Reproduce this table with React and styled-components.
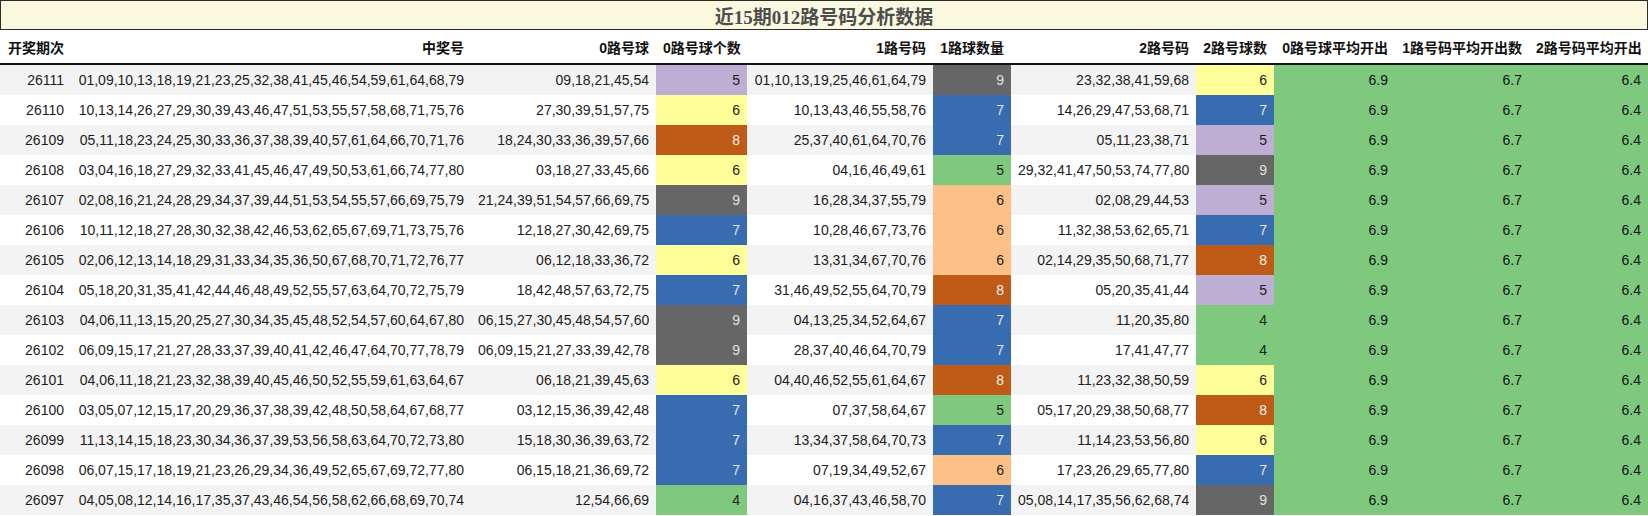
import React from "react";
import styled, { createGlobalStyle } from "styled-components";

const GlobalStyle = createGlobalStyle`
    html, body {
        margin: 0;
        padding: 0;
        background: #ffffff;
    }
    body {
        font-family: "Liberation Sans", "Noto Sans CJK SC", sans-serif;
    }
`;

const Page = styled.div`
    width: 1648px;
    display: flex;
    flex-direction: column;
`;

const TitleBar = styled.div`
    height: 28px;
    border: 1px solid #2b2b2b;
    background-color: #faf8df;
    display: flex;
    align-items: center;
    justify-content: center;
    font-family: "Liberation Serif", "Noto Sans CJK SC", serif;
    font-weight: bold;
    font-size: 19px;
    color: #4d4d4d;
`;

const Table = styled.table`
    border-collapse: collapse;
    table-layout: fixed;
    width: 1648px;
    font-size: 14px;
`;

const HeadCell = styled.th`
    height: 33px;
    padding: 0 7px;
    text-align: right;
    font-weight: bold;
    color: #111111;
    white-space: nowrap;
    border-bottom: 2px solid #111111;
    background: #ffffff;
`;

const Row = styled.tr`
    background-color: ${(p) => (p.$odd ? "#f3f3f3" : "#ffffff")};
`;

const Cell = styled.td`
    height: 30px;
    padding: 0 7px;
    text-align: right;
    white-space: nowrap;
    color: #1c1c1c;
    overflow: hidden;
`;

const CountCell = styled(Cell)`
    background-color: ${(p) => p.$bg};
    color: ${(p) => p.$fg};
`;

const AvgCell = styled(Cell)`
    background-color: #7fc97f;
    color: #111111;
`;

const PALETTE = {
    green: ["#7fc97f", "#1c1c1c"],
    purple: ["#beaed4", "#1c1c1c"],
    yellow: ["#ffff99", "#1c1c1c"],
    peach: ["#fdc086", "#1c1c1c"],
    blue: ["#386cb0", "#e6e6e6"],
    brown: ["#bf5b17", "#f2f2f2"],
    gray: ["#666666", "#e0e0e0"],
};

// colour scale per count column
const scale02 = { 4: "green", 5: "purple", 6: "yellow", 7: "blue", 8: "brown", 9: "gray" };
const scale1 = { 5: "green", 6: "peach", 7: "blue", 8: "brown", 9: "gray" };

const widths = [71, 400, 185, 91, 186, 78, 185, 78, 121, 134, 119];

const headers = [
    "开奖期次",
    "中奖号",
    "0路号球",
    "0路号球个数",
    "1路号码",
    "1路球数量",
    "2路号码",
    "2路号球数",
    "0路号球平均开出",
    "1路号码平均开出数",
    "2路号码平均开出",
];

const rows = [
    ["26111", "01,09,10,13,18,19,21,23,25,32,38,41,45,46,54,59,61,64,68,79", "09,18,21,45,54", 5, "01,10,13,19,25,46,61,64,79", 9, "23,32,38,41,59,68", 6],
    ["26110", "10,13,14,26,27,29,30,39,43,46,47,51,53,55,57,58,68,71,75,76", "27,30,39,51,57,75", 6, "10,13,43,46,55,58,76", 7, "14,26,29,47,53,68,71", 7],
    ["26109", "05,11,18,23,24,25,30,33,36,37,38,39,40,57,61,64,66,70,71,76", "18,24,30,33,36,39,57,66", 8, "25,37,40,61,64,70,76", 7, "05,11,23,38,71", 5],
    ["26108", "03,04,16,18,27,29,32,33,41,45,46,47,49,50,53,61,66,74,77,80", "03,18,27,33,45,66", 6, "04,16,46,49,61", 5, "29,32,41,47,50,53,74,77,80", 9],
    ["26107", "02,08,16,21,24,28,29,34,37,39,44,51,53,54,55,57,66,69,75,79", "21,24,39,51,54,57,66,69,75", 9, "16,28,34,37,55,79", 6, "02,08,29,44,53", 5],
    ["26106", "10,11,12,18,27,28,30,32,38,42,46,53,62,65,67,69,71,73,75,76", "12,18,27,30,42,69,75", 7, "10,28,46,67,73,76", 6, "11,32,38,53,62,65,71", 7],
    ["26105", "02,06,12,13,14,18,29,31,33,34,35,36,50,67,68,70,71,72,76,77", "06,12,18,33,36,72", 6, "13,31,34,67,70,76", 6, "02,14,29,35,50,68,71,77", 8],
    ["26104", "05,18,20,31,35,41,42,44,46,48,49,52,55,57,63,64,70,72,75,79", "18,42,48,57,63,72,75", 7, "31,46,49,52,55,64,70,79", 8, "05,20,35,41,44", 5],
    ["26103", "04,06,11,13,15,20,25,27,30,34,35,45,48,52,54,57,60,64,67,80", "06,15,27,30,45,48,54,57,60", 9, "04,13,25,34,52,64,67", 7, "11,20,35,80", 4],
    ["26102", "06,09,15,17,21,27,28,33,37,39,40,41,42,46,47,64,70,77,78,79", "06,09,15,21,27,33,39,42,78", 9, "28,37,40,46,64,70,79", 7, "17,41,47,77", 4],
    ["26101", "04,06,11,18,21,23,32,38,39,40,45,46,50,52,55,59,61,63,64,67", "06,18,21,39,45,63", 6, "04,40,46,52,55,61,64,67", 8, "11,23,32,38,50,59", 6],
    ["26100", "03,05,07,12,15,17,20,29,36,37,38,39,42,48,50,58,64,67,68,77", "03,12,15,36,39,42,48", 7, "07,37,58,64,67", 5, "05,17,20,29,38,50,68,77", 8],
    ["26099", "11,13,14,15,18,23,30,34,36,37,39,53,56,58,63,64,70,72,73,80", "15,18,30,36,39,63,72", 7, "13,34,37,58,64,70,73", 7, "11,14,23,53,56,80", 6],
    ["26098", "06,07,15,17,18,19,21,23,26,29,34,36,49,52,65,67,69,72,77,80", "06,15,18,21,36,69,72", 7, "07,19,34,49,52,67", 6, "17,23,26,29,65,77,80", 7],
    ["26097", "04,05,08,12,14,16,17,35,37,43,46,54,56,58,62,66,68,69,70,74", "12,54,66,69", 4, "04,16,37,43,46,58,70", 7, "05,08,14,17,35,56,62,68,74", 9],
];

function Count({ value, scale }) {
    const [bg, fg] = PALETTE[scale[value]];
    return (
        <CountCell $bg={bg} $fg={fg}>
            {value}
        </CountCell>
    );
}

export default function App() {
    return (
        <>
            <GlobalStyle />
            <Page>
                <TitleBar>近15期012路号码分析数据</TitleBar>
                <Table>
                    <colgroup>
                        {widths.map((w, i) => (
                            <col key={i} style={{ width: w }} />
                        ))}
                    </colgroup>
                    <thead>
                        <tr>
                            {headers.map((h) => (
                                <HeadCell key={h}>{h}</HeadCell>
                            ))}
                        </tr>
                    </thead>
                    <tbody>
                        {rows.map((r, i) => (
                            <Row key={r[0]} $odd={i % 2 === 0}>
                                <Cell>{r[0]}</Cell>
                                <Cell>{r[1]}</Cell>
                                <Cell>{r[2]}</Cell>
                                <Count value={r[3]} scale={scale02} />
                                <Cell>{r[4]}</Cell>
                                <Count value={r[5]} scale={scale1} />
                                <Cell>{r[6]}</Cell>
                                <Count value={r[7]} scale={scale02} />
                                <AvgCell>6.9</AvgCell>
                                <AvgCell>6.7</AvgCell>
                                <AvgCell>6.4</AvgCell>
                            </Row>
                        ))}
                    </tbody>
                </Table>
            </Page>
        </>
    );
}
